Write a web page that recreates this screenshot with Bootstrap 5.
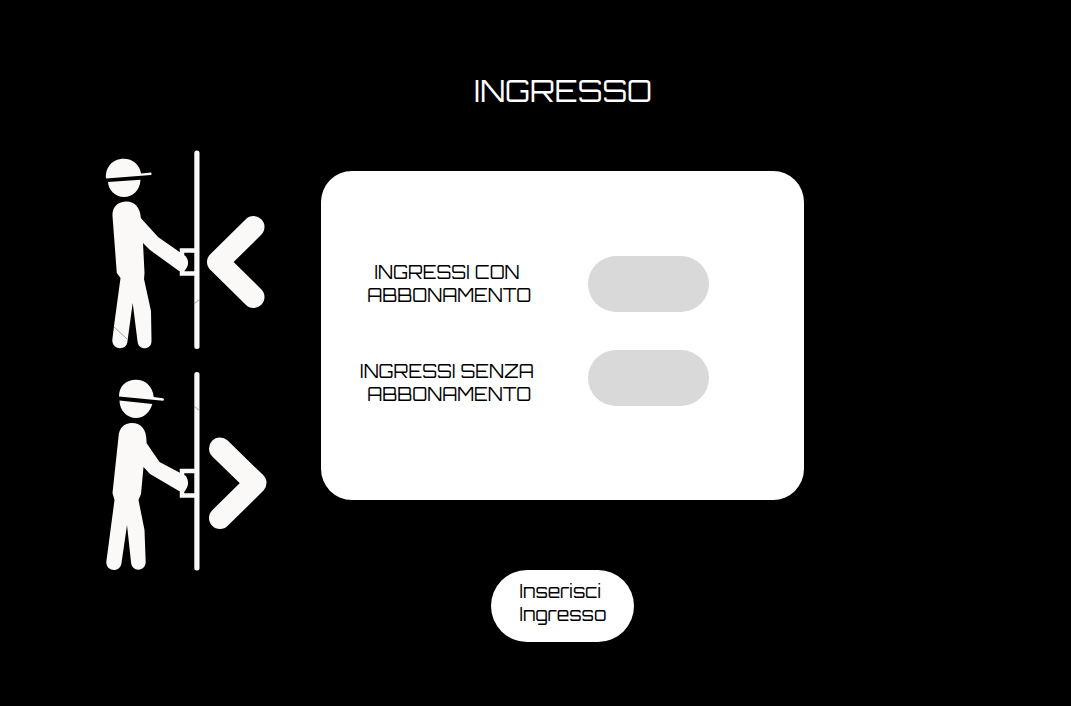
<!DOCTYPE html>
<html lang="it">
<head>
<meta charset="utf-8">
<meta name="viewport" content="width=device-width, initial-scale=1">
<title>Ingresso</title>
<link href="https://cdn.jsdelivr.net/npm/bootstrap@5.3.0/dist/css/bootstrap.min.css" rel="stylesheet">
<style>
  body { background: #000; color: #000; font-family: Orbitron, "DejaVu Sans", sans-serif; }
  .entry-layout { display: grid; grid-template-columns: 30% 45.1% 1fr; }
  .doors { padding: 150px 0 0 100px; gap: 21px; }
  .doors svg { width: 170px; height: 200px; fill: #fbf9f8; }
  .entry-form { padding-top: 71px; }
  .entry-title { font-size: 30px; line-height: 40px; font-weight: 400; margin-bottom: 60px; }
  .entry-panel { border-radius: 31px; padding: 85px 32px 94px; gap: 43px; }
  .entry-labels { width: 192px; gap: 53px; font-size: 18px; line-height: 23px; }
  .entry-fields { gap: 38px; }
  .entry-fields .form-control { width: 121px; height: 56px; background: #d9d9d9; font-size: 18px; text-align: center; }
  .entry-submit { margin-top: 70px; padding: 10px 28px 16px; font-size: 18px; line-height: 23px; border: 0; }
</style>
</head>
<body>
<main class="entry-layout">
  <aside class="doors d-flex flex-column">
    <svg viewBox="100 150 170 200" role="img" aria-label="Entrata">
      <path d="M106 178.500C105 167 113 158.700 123.500 158.700C133 158.700 140 165 141 173.500L151 172.500Q152.500 174 151 175Z"/>
      <path d="M108 182L140.500 179.800C140 190 133 197 124 197C115 197 108.500 190 108 182Z"/>
      <path d="M112.500 216C112 207 118 201.500 126.500 201.500C135 201.500 140.500 208 140.800 218L158 237L186 256.500Q191 264 184 271.500L179 271L150 250L143 243L144.500 273L144 279L151 311L151.500 341C151.500 350.500 138 351 137.500 341L132.700 303L127.500 341C127 351 112 350.500 112.300 340L114 326L120.500 278L116.800 273Z"/>
      <path d="M195 250.500H182V256M182 269V273.500H195" fill="none" stroke="#fbf9f8" stroke-width="4.500"/>
      <rect x="194.300" y="150.500" width="5.200" height="198.500" rx="2.500"/>
      <path d="M253.500 227L218 262L253.500 297" fill="none" stroke="#fbf9f8" stroke-width="22" stroke-linecap="round" stroke-linejoin="round"/>
      <path d="M114 327L127 339M194 304L200 299" fill="none" stroke="#777" stroke-width=".7"/>
    </svg>
    <svg viewBox="100 371 170 200" role="img" aria-label="Uscita">
      <path d="M119 396.500C119 386 126 379.700 136 379.700C146 379.700 153 387 153.700 397L163 398.200Q165 399.500 163 400.800Z"/>
      <path d="M119.500 400.500L152.300 404C150 412 144 418 136 418C126.500 418 119.500 410 119.500 400.500Z"/>
      <path d="M118.500 437C119 428 124 423 132 423C141 423 147 429 146.500 443L159.500 462L186 476Q191 484 184 492L179 491L150 474L143.500 467L141 494L138.500 500L144.500 530L145.700 562C145.500 572 131.500 572.500 131 562L127 525L121.500 563C120.500 573 106 572 106.300 562L114.500 500L112.500 493Z"/>
      <path d="M195 471H182V477M182 490V495.500H195" fill="none" stroke="#fbf9f8" stroke-width="4.500"/>
      <rect x="194.300" y="372" width="5.200" height="198.500" rx="2.500"/>
      <path d="M220 448.500L255.500 483L220 518" fill="none" stroke="#fbf9f8" stroke-width="22" stroke-linecap="round" stroke-linejoin="round"/>
      <path d="M194 406L200 411" fill="none" stroke="#777" stroke-width=".7"/>
    </svg>
  </aside>
  <form class="entry-form d-flex flex-column align-items-center">
    <h1 class="entry-title text-white">INGRESSO</h1>
    <div class="entry-panel bg-white w-100 d-flex align-items-end">
      <div class="entry-labels d-flex flex-column text-center text-nowrap">
        <label for="con">INGRESSI CON&nbsp;<br>ABBONAMENTO</label>
        <label for="senza">INGRESSI SENZA&nbsp;<br>ABBONAMENTO</label>
      </div>
      <div class="entry-fields d-flex flex-column">
        <input class="form-control rounded-pill border-0" id="con" type="text" inputmode="numeric">
        <input class="form-control rounded-pill border-0" id="senza" type="text" inputmode="numeric">
      </div>
    </div>
    <button type="button" class="entry-submit btn btn-light bg-white text-black rounded-pill text-start">Inserisci<br>Ingresso</button>
  </form>
</main>
<script src="https://cdn.jsdelivr.net/npm/bootstrap@5.3.0/dist/js/bootstrap.bundle.min.js"></script>
</body>
</html>
